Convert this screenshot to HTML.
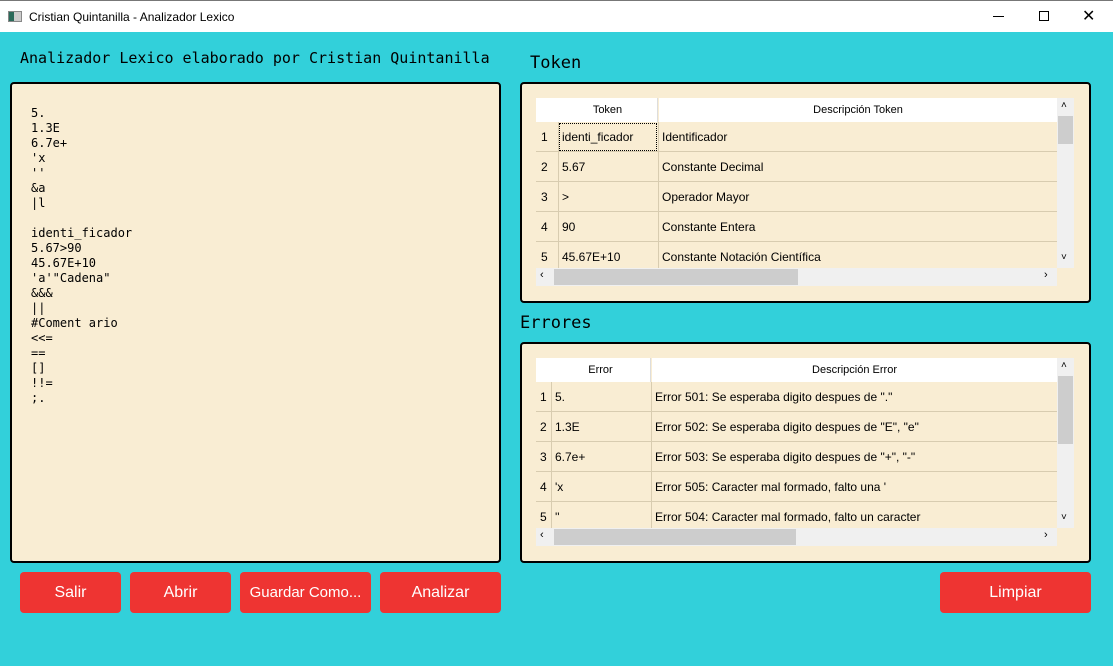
<!DOCTYPE html>
<html><head><meta charset="utf-8"><style>
*{box-sizing:border-box;margin:0;padding:0}
body{width:1113px;height:666px;background:#32d0da;position:relative;overflow:hidden;font-family:"Liberation Sans",sans-serif}
.tb{position:absolute;left:0;top:0;width:1113px;height:32px;background:#fff;border-top:1px solid #777}
.tb .t{position:absolute;left:29px;top:9px;font-size:12px;color:#000}
.ico{position:absolute;left:8px;top:10px;width:14px;height:11px;border:1px solid #888;background:linear-gradient(90deg,#2a6a5a 40%,#ccc 40%)}
.mono{font-family:"DejaVu Sans Mono","Liberation Mono",monospace}
.lbl{position:absolute;color:#000}
.box{position:absolute;background:#f9edd3;border:2px solid #000;border-radius:4px}
.ed{position:absolute;left:31px;top:106px;font-size:12px;line-height:15px;white-space:pre;color:#000}
.btn{position:absolute;top:572px;height:41px;background:#ee3432;border-radius:4px;color:#fff;font-size:16px;text-align:center;line-height:41px}
.tbl{position:absolute;left:536px;width:538px;height:188px;background:#f9edd3;font-size:12px;overflow:hidden}
.hdr{position:absolute;top:0;height:24px;background:#fff;text-align:center;line-height:24px;font-size:11px}
.row{position:absolute;left:0;height:30px;width:521px;border-bottom:1px solid #d8ccb0}
.row span{position:absolute;top:8px}
.vline{position:absolute;top:24px;width:1px;height:146px;background:#d8ccb0}
.hs{position:absolute;left:0;top:170px;width:521px;height:18px;background:#f0f0f0}
.vs{position:absolute;left:521px;top:0;width:17px;height:170px;background:#f0f0f0}
</style></head><body>
<div class="tb"><div class="ico"></div><div class="t">Cristian Quintanilla - Analizador Lexico</div>
<div style="position:absolute;left:993px;top:15px;width:11px;height:1px;background:#000"></div>
<div style="position:absolute;left:1039px;top:10px;width:10px;height:10px;border:1px solid #000"></div>
<div style="position:absolute;left:1082px;top:5px;font-size:16px">✕</div></div>
<div class="lbl mono" style="left:20px;top:49px;font-size:15px">Analizador Lexico elaborado por Cristian Quintanilla</div>
<div class="box" style="left:10px;top:82px;width:491px;height:481px"></div>
<div class="ed mono">5.
1.3E
6.7e+
'x
''
&amp;a
|l

identi_ficador
5.67&gt;90
45.67E+10
'a'"Cadena"
&amp;&amp;&amp;
||
#Coment ario
&lt;&lt;=
==
[]
!!=
;.</div>
<div class="lbl mono" style="left:530px;top:53px;font-size:17px">Token</div>
<div class="box" style="left:520px;top:82px;width:571px;height:221px"></div>
<div class="tbl" style="top:98px">
<div class="hdr" style="left:0;width:22px"></div>
<div class="hdr" style="left:22px;width:100px;border-right:1px solid #ddd">Token</div>
<div class="hdr" style="left:123px;width:398px">Descripción Token</div>
<div class="row" style="top:24px"><span style="left:5px">1</span><span style="left:26px">identi_ficador</span><span style="left:126px">Identificador</span><div style="position:absolute;left:23px;top:1px;width:98px;height:28px;border:1px dotted #000"></div></div>
<div class="row" style="top:54px"><span style="left:5px">2</span><span style="left:26px">5.67</span><span style="left:126px">Constante Decimal</span></div>
<div class="row" style="top:84px"><span style="left:5px">3</span><span style="left:26px">&gt;</span><span style="left:126px">Operador Mayor</span></div>
<div class="row" style="top:114px"><span style="left:5px">4</span><span style="left:26px">90</span><span style="left:126px">Constante Entera</span></div>
<div class="row" style="top:144px;border:0"><span style="left:5px">5</span><span style="left:26px">45.67E+10</span><span style="left:126px">Constante Notación Científica</span></div>
<div class="vline" style="left:22px"></div><div class="vline" style="left:122px"></div>
<div class="hs"><div style="position:absolute;left:18px;top:1px;width:244px;height:16px;background:#cdcdcd"></div><span style="position:absolute;left:4px;top:1px;font-size:11px">‹</span><span style="position:absolute;left:508px;top:1px;font-size:11px">›</span></div>
<div class="vs"><div style="position:absolute;left:1px;top:18px;width:15px;height:28px;background:#cdcdcd"></div><span style="position:absolute;left:4px;top:2px;font-size:10px">˄</span><span style="position:absolute;left:4px;top:154px;font-size:10px">˅</span></div>
</div>
<div class="lbl mono" style="left:520px;top:313px;font-size:17px">Errores</div>
<div class="box" style="left:520px;top:342px;width:571px;height:221px"></div>
<div class="tbl" style="top:358px">
<div class="hdr" style="left:0;width:15px"></div>
<div class="hdr" style="left:15px;width:100px;border-right:1px solid #ddd">Error</div>
<div class="hdr" style="left:116px;width:405px">Descripción Error</div>
<div class="row" style="top:24px"><span style="left:4px">1</span><span style="left:19px">5.</span><span style="left:119px">Error 501: Se esperaba digito despues de "."</span></div>
<div class="row" style="top:54px"><span style="left:4px">2</span><span style="left:19px">1.3E</span><span style="left:119px">Error 502: Se esperaba digito despues de "E", "e"</span></div>
<div class="row" style="top:84px"><span style="left:4px">3</span><span style="left:19px">6.7e+</span><span style="left:119px">Error 503: Se esperaba digito despues de "+", "-"</span></div>
<div class="row" style="top:114px"><span style="left:4px">4</span><span style="left:19px">'x</span><span style="left:119px">Error 505: Caracter mal formado, falto una '</span></div>
<div class="row" style="top:144px;border:0"><span style="left:4px">5</span><span style="left:19px">''</span><span style="left:119px">Error 504: Caracter mal formado, falto un caracter</span></div>
<div class="vline" style="left:15px"></div><div class="vline" style="left:115px"></div>
<div class="hs"><div style="position:absolute;left:18px;top:1px;width:242px;height:16px;background:#cdcdcd"></div><span style="position:absolute;left:4px;top:1px;font-size:11px">‹</span><span style="position:absolute;left:508px;top:1px;font-size:11px">›</span></div>
<div class="vs"><div style="position:absolute;left:1px;top:18px;width:15px;height:68px;background:#cdcdcd"></div><span style="position:absolute;left:4px;top:2px;font-size:10px">˄</span><span style="position:absolute;left:4px;top:154px;font-size:10px">˅</span></div>
</div>
<div class="btn" style="left:20px;width:101px">Salir</div>
<div class="btn" style="left:130px;width:101px">Abrir</div>
<div class="btn" style="left:240px;width:131px;font-size:15px">Guardar Como...</div>
<div class="btn" style="left:380px;width:121px">Analizar</div>
<div class="btn" style="left:940px;width:151px">Limpiar</div>
</body></html>
